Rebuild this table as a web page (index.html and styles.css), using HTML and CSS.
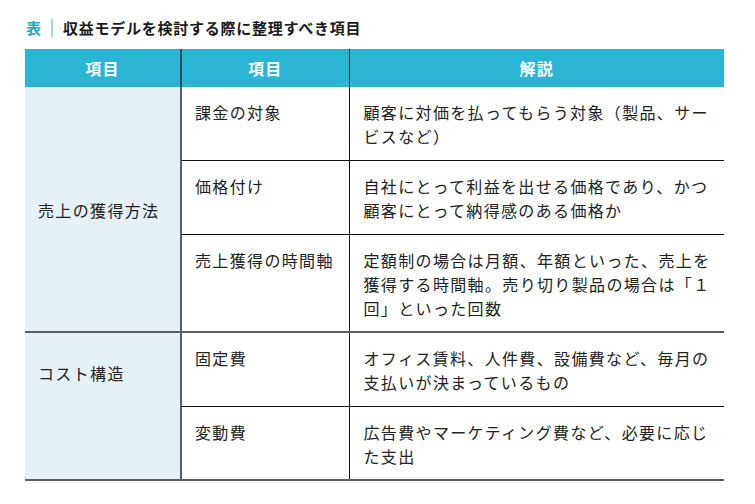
FILE: index.html
```html
<!DOCTYPE html>
<html lang="ja">
<head>
<meta charset="utf-8">
<title>収益モデルを検討する際に整理すべき項目</title>
<link rel="stylesheet" href="styles.css">
</head>
<body>
<div class="page">
  <h1 class="caption"><span class="caption-label">表</span><span class="caption-text">収益モデルを検討する際に整理すべき項目</span></h1>
  <table class="model-table">
    <colgroup>
      <col class="col-group">
      <col class="col-item">
      <col class="col-desc">
    </colgroup>
    <thead>
      <tr>
        <th class="th-group">項目</th>
        <th class="th-item">項目</th>
        <th class="th-desc">解説</th>
      </tr>
    </thead>
    <tbody>
      <tr>
        <td class="group" rowspan="3">売上の獲得方法</td>
        <td class="item">課金の対象</td>
        <td class="desc">顧客に対価を払ってもらう対象（製品、サービスなど）</td>
      </tr>
      <tr>
        <td class="item">価格付け</td>
        <td class="desc">自社にとって利益を出せる価格であり、かつ顧客にとって納得感のある価格か</td>
      </tr>
      <tr class="group-end">
        <td class="item">売上獲得の時間軸</td>
        <td class="desc">定額制の場合は月額、年額といった、売上を獲得する時間軸。売り切り製品の場合は「１回」といった回数</td>
      </tr>
      <tr>
        <td class="group group-cost" rowspan="2">コスト構造</td>
        <td class="item">固定費</td>
        <td class="desc">オフィス賃料、人件費、設備費など、毎月の支払いが決まっているもの</td>
      </tr>
      <tr class="group-end">
        <td class="item">変動費</td>
        <td class="desc">広告費やマーケティング費など、必要に応じた支出</td>
      </tr>
    </tbody>
  </table>
</div>
</body>
</html>
```
FILE: styles.css
```css
* { box-sizing: border-box; }

html, body {
  margin: 0;
  padding: 0;
  background: #ffffff;
}

body {
  font-family: "Noto Sans CJK JP", "Noto Sans", sans-serif;
  color: #222222;
}

.page {
  padding: 19px 31px 0 25px;
}

.caption {
  display: flex;
  align-items: center;
  margin: 0 0 12px 0;
  font-size: 15px;
  line-height: 18px;
  font-weight: 700;
  letter-spacing: 0.75px;
}

.caption-label {
  color: #23a6c8;
  width: 26px;
  padding-left: 1px;
}

.caption-text {
  border-left: 2px solid #9ad6e4;
  padding-left: 10px;
  color: #1a1a1a;
}

.model-table {
  width: 699px;
  border-collapse: collapse;
  table-layout: fixed;
  font-size: 16px;
  line-height: 24px;
  letter-spacing: 1.35px;
}

.col-group { width: 156px; }
.col-item { width: 168px; }
.col-desc { width: 375px; }

.model-table th {
  background: #29b5d3;
  color: #ffffff;
  font-weight: 700;
  height: 38px;
  padding: 0;
  text-align: center;
  vertical-align: middle;
}

.th-group {
  border-right: 2px solid rgba(0, 0, 0, 0.55);
}

.th-item {
  border-right: 1px solid #111111;
}

.model-table td {
  padding: 13px 6px 12px 14px;
  vertical-align: top;
  font-weight: 400;
}

.group {
  background: #e5f1f6;
  border-right: 2px solid #5e5e5e;
  border-bottom: 2px solid #5e5e5e;
  vertical-align: middle !important;
  padding-left: 13px !important;
}

.group-cost {
  padding-bottom: 80px !important;
}

.item {
  border-right: 1px solid #111111;
  border-bottom: 1px solid #111111;
  padding-left: 13px !important;
}

.desc {
  border-bottom: 1px solid #111111;
}

.group-end .item,
.group-end .desc {
  border-bottom: 2px solid #5e5e5e;
  padding-bottom: 11px;
}
```
